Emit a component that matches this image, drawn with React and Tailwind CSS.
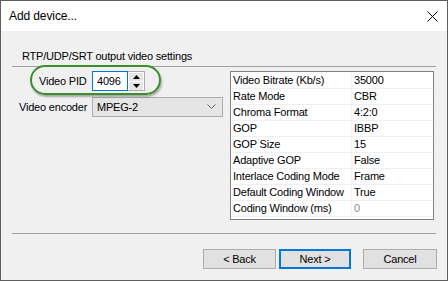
import React from "react";

const rows = [
  ["Video Bitrate (Kb/s)", "35000"],
  ["Rate Mode", "CBR"],
  ["Chroma Format", "4:2:0"],
  ["GOP", "IBBP"],
  ["GOP Size", "15"],
  ["Adaptive GOP", "False"],
  ["Interlace Coding Mode", "Frame"],
  ["Default Coding Window", "True"],
  ["Coding Window (ms)", "0"],
];

export default function App() {
  return (
    <div
      className="relative w-[448px] h-[281px] border border-[#5e5e5e] bg-[#f0f0f0] flex flex-col text-[11px] tracking-[-0.2px] text-black leading-[16px] whitespace-nowrap"
      style={{ fontFamily: '"Liberation Sans", Arial, sans-serif' }}
    >
      {/* title bar */}
      <div className="h-[30px] bg-white flex items-center justify-between pl-[8px] pr-[9px] shrink-0">
        <span className="text-[12px] tracking-[-0.1px]">Add device...</span>
        <svg width="11" height="11" viewBox="0 0 11 11">
          <path d="M0.5 0.5 L10.5 10.5 M10.5 0.5 L0.5 10.5" stroke="#000" strokeWidth="1" />
        </svg>
      </div>

      {/* body */}
      <div className="flex flex-col pt-[17px] flex-1">
        <div className="pl-[21px] h-[16px]">RTP/UDP/SRT output video settings</div>
        <div className="mt-[2px] mx-[11px] h-px bg-[#a0a0a0]" />

        <div className="flex mt-[4px]">
          {/* left column */}
          <div className="w-[229px] flex flex-col">
            <div className="flex items-center h-[20px]">
              <span className="ml-[38px] w-[53px]">Video PID</span>
              <div className="flex h-[20px]">
                <div className="w-[36px] h-[20px] border border-[#0078d7] bg-white pl-[4px] flex items-center">4096</div>
                <div className="w-[17px] h-[20px] border border-[#adadad] border-l-0 bg-white flex flex-col items-center justify-center gap-[1px] px-[1px]">
                  <div className="w-full h-[8px] bg-[#e6e6e6] flex items-center justify-center">
                    <svg width="7" height="4" viewBox="0 0 7 4"><path d="M3.5 0 L7 4 L0 4 Z" fill="#000" /></svg>
                  </div>
                  <div className="w-full h-[8px] bg-[#e6e6e6] flex items-center justify-center">
                    <svg width="7" height="4" viewBox="0 0 7 4"><path d="M0 0 L7 0 L3.5 4 Z" fill="#000" /></svg>
                  </div>
                </div>
              </div>
            </div>
            <div className="flex items-center h-[20px] mt-[6px]">
              <span className="ml-[18px] w-[73px]">Video encoder</span>
              <div className="w-[131px] h-[20px] border border-[#adadad] bg-[#e5e5e5] flex items-center justify-between pl-[4px] pr-[6px]">
                <span>MPEG-2</span>
                <svg width="9" height="6" viewBox="0 0 9 6">
                  <path d="M0.5 0.5 L4.5 4.5 L8.5 0.5" stroke="#606060" strokeWidth="1" fill="none" />
                </svg>
              </div>
            </div>
          </div>

          {/* property grid */}
          <div className="w-[204px] h-[149px] border border-[#828282] bg-white flex flex-col pt-[1px]">
            {rows.map(([k, v], i) => (
              <div key={k} className="flex h-[16px] border-b border-[#f0f0f0]">
                <div className="w-[121px] pl-[2px] border-r border-[#f0f0f0] leading-[15px] overflow-hidden">{k}</div>
                <div className={"pl-[2px] leading-[15px] " + (i === rows.length - 1 ? "text-[#8d8d8d]" : "")}>{v}</div>
              </div>
            ))}
          </div>
        </div>

        <div className="mt-[13px] mx-[11px] h-px bg-[#a0a0a0]" />

        <div className="flex justify-end mt-[15px] pr-[10px]">
          <div className="w-[73px] h-[20px] border border-[#adadad] bg-[#e1e1e1] flex items-center justify-center">&lt; Back</div>
          <div className="ml-[3px] w-[72px] h-[20px] border-2 border-[#0078d7] bg-[#e1e1e1] flex items-center justify-center">Next &gt;</div>
          <div className="ml-[12px] w-[74px] h-[20px] border border-[#adadad] bg-[#e1e1e1] flex items-center justify-center">Cancel</div>
        </div>
      </div>

      {/* annotation ellipse */}
      <div className="absolute left-[29px] top-[64px] w-[131px] h-[30px] rounded-full border-2 border-[#3b8e2a] shadow-[1px_2px_2px_rgba(0,0,0,0.3)]" />
    </div>
  );
}
